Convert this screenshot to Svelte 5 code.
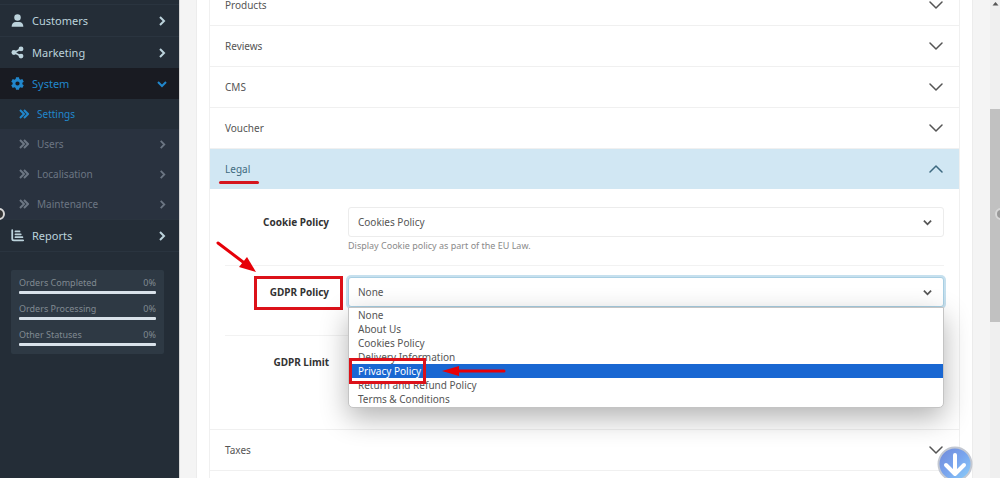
<script lang="ts">
	interface MenuItem {
		name: string
		icon: 'user' | 'share' | 'gear' | 'chart'
		open?: boolean
		children?: { name: string; active?: boolean; more?: boolean }[]
	}

	const menu: MenuItem[] = [
		{ name: 'Customers', icon: 'user' },
		{ name: 'Marketing', icon: 'share' },
		{
			name: 'System',
			icon: 'gear',
			open: true,
			children: [
				{ name: 'Settings', active: true },
				{ name: 'Users', more: true },
				{ name: 'Localisation', more: true },
				{ name: 'Maintenance', more: true }
			]
		},
		{ name: 'Reports', icon: 'chart' }
	]

	const stats = [
		{ name: 'Orders Completed', value: 0 },
		{ name: 'Orders Processing', value: 0 },
		{ name: 'Other Statuses', value: 0 }
	]

	const sections = ['Products', 'Reviews', 'CMS', 'Voucher', 'Legal', 'Taxes']

	const pages = [
		'None',
		'About Us',
		'Cookies Policy',
		'Delivery Information',
		'Privacy Policy',
		'Return and Refund Policy',
		'Terms & Conditions'
	]

	let openSection = $state('Legal')
	let cookiePolicy = $state('Cookies Policy')
	let gdprPolicy = $state('None')
	let gdprLimit = $state('180')
	let highlighted = $state('Privacy Policy')

	function toggle(name: string) {
		openSection = openSection === name ? '' : name
	}
</script>

{#snippet chevron(dir: string)}
	<svg class="chevron {dir}" viewBox="0 0 10 10" aria-hidden="true"><path d="M3 1l4 4-4 4" /></svg>
{/snippet}

<div class="shell">
	<nav class="sidebar">
		<ul class="menu">
			{#each menu as item}
				<li class:open={item.open}>
					<a href="#{item.name}" class="top">
						<svg class="icon" viewBox="0 0 16 16" aria-hidden="true">
							{#if item.icon === 'user'}
								<circle cx="8" cy="4.3" r="4" />
								<path d="M.8 15.700c0-4 2-6 5.200-6h4c3.200 0 5.200 2 5.200 6z" />
							{:else if item.icon === 'share'}
								<path d="M12 3.6L4 8l8 4.4" fill="none" stroke="currentColor" stroke-width="2" />
								<circle cx="12.3" cy="3.6" r="3" />
								<circle cx="3.6" cy="8" r="3" />
								<circle cx="12.3" cy="12.4" r="3" />
							{:else if item.icon === 'gear'}
								<path
									fill-rule="evenodd"
									d="M6.2.2h3.600l.5 2.300 1.400.8 2.200-.7 1.800 3.100-1.700 1.500v1.600l1.700 1.500-1.800 3.100-2.200-.7-1.400.8-.5 2.300H6.200l-.5-2.300-1.400-.8-2.200.7L.3 10.300 2 8.800V7.200L.3 5.700l1.800-3.100 2.200.7 1.400-.8zM8 5.400a2.600 2.600 0 1 0 0 5.200 2.600 2.600 0 0 0 0-5.200z"
								/>
							{:else}
								<path
									d="M1.500 1.500v10.500q0 2 2 2h11.500M5.500 3h5M5.500 6.500h6.500M5.500 10h8.500"
									fill="none"
									stroke="currentColor"
									stroke-width="2.200"
									stroke-linecap="round"
								/>
							{/if}
						</svg>
						<span>{item.name}</span>
						{@render chevron(item.open ? 'down' : 'right')}
					</a>
					{#if item.children}
						<ul class="sub">
							{#each item.children as child}
								<li>
									<a href="#{child.name}" class:active={child.active}>
										<svg class="double" viewBox="0 0 10 10" aria-hidden="true">
											<path d="M1 1l4 4-4 4M5 1l4 4-4 4" />
										</svg>
										<span>{child.name}</span>
										{#if child.more}{@render chevron('right')}{/if}
									</a>
								</li>
							{/each}
						</ul>
					{/if}
				</li>
			{/each}
		</ul>
		<div class="stats">
			{#each stats as stat}
				<div class="stat">
					<div class="stat-text"><span>{stat.name}</span><span>{stat.value}%</span></div>
					<div class="bar"><div class="fill" style="width: {stat.value}%"></div></div>
				</div>
			{/each}
		</div>
	</nav>

	<main>
		<div class="card">
			<div class="accordion">
				{#each sections as name}
					<section>
						<button
							type="button"
							class="head"
							class:expanded={openSection === name}
							aria-expanded={openSection === name}
							onclick={() => toggle(name)}
						>
							<span class:marked={name === 'Legal'}>{name}</span>
							<svg class="caret" viewBox="0 0 14 14" aria-hidden="true"><path d="M1 4l6 6 6-6" /></svg>
						</button>
						{#if name === 'Legal' && openSection === name}
							<div class="body">
								<div class="field">
									<label for="cookie">Cookie Policy</label>
									<div class="control">
										<div class="select">
											<select id="cookie" bind:value={cookiePolicy}>
												{#each pages as page}<option>{page}</option>{/each}
											</select>
											{@render chevron('down')}
										</div>
										<small>Display Cookie policy as part of the EU Law.</small>
									</div>
								</div>
								<div class="field">
									<label for="gdpr">
										GDPR Policy
										<span class="frame"></span>
										<svg class="arrow pointer" viewBox="0 0 42 34" aria-hidden="true">
											<path d="M2 3L31 25" stroke-width="3" />
											<path class="tip" d="M40 32L23 27l8-10z" />
										</svg>
									</label>
									<div class="control">
										<div class="select focus">
											<select id="gdpr" bind:value={gdprPolicy}>
												{#each pages as page}<option>{page}</option>{/each}
											</select>
											{@render chevron('down')}
											<ul class="dropdown" role="listbox" aria-label="GDPR Policy">
												{#each pages as page}
													<li
														role="option"
														aria-selected={page === highlighted}
														onmouseenter={() => (highlighted = page)}
													>
														{page}
														{#if page === 'Privacy Policy'}
															<span class="frame"></span>
															<svg class="arrow left" viewBox="0 0 64 12" aria-hidden="true">
																<path d="M14 6H62" stroke-width="3" />
																<path class="tip" d="M0 6L17 1v10z" />
															</svg>
														{/if}
													</li>
												{/each}
											</ul>
										</div>
									</div>
								</div>
								<div class="field">
									<label for="limit">GDPR Limit</label>
									<div class="control">
										<input id="limit" type="text" bind:value={gdprLimit} />
									</div>
								</div>
							</div>
						{/if}
					</section>
				{/each}
			</div>
		</div>
	</main>

	<div class="scrollbar" aria-hidden="true">
		<svg viewBox="0 0 10 8"><path d="M5.500 2L8.500 5.500h-6z" /></svg>
		<div class="thumb"></div>
	</div>

	<span class="knob start"></span>
	<span class="knob end"></span>
	<button type="button" class="jump" aria-label="Scroll down">
		<svg viewBox="0 0 36 36" aria-hidden="true">
			<defs>
				<linearGradient id="ball" x1="0" y1="0" x2="1" y2="1">
					<stop offset="0" stop-color="#7188d8" />
					<stop offset="0.500" stop-color="#79a5ee" />
					<stop offset="1" stop-color="#8ed2fa" />
				</linearGradient>
			</defs>
			<circle cx="18" cy="18" r="16.500" fill="url(#ball)" stroke="#c3c8d2" stroke-width="2" />
			<path d="M18 9v18M9 19l9 9 9-9" />
		</svg>
	</button>
</div>

<style>
	:global(body) {
		margin: 0;
		overflow: hidden;
		background: #f4f4f4;
	}
	.shell {
		position: relative;
		display: flex;
		height: 100vh;
		overflow: hidden;
		font: 10px/16px 'Noto Sans', 'Open Sans', sans-serif;
		color: #555;
	}
	ul {
		margin: 0;
		padding: 0;
		list-style: none;
	}
	a {
		color: inherit;
		text-decoration: none;
	}
	svg {
		flex: none;
	}

	/* sidebar */
	.sidebar {
		flex: 0 0 179px;
		background: #242d37;
		border-right: 1px solid #d8d8d8;
	}
	.menu {
		padding-top: 4px;
	}
	.menu > li {
		border-top: 1px solid #2a343f;
	}
	.menu > .open {
		border-top: 0;
	}
	.menu > li:last-child {
		border-bottom: 1px solid #2a343f;
	}
	.top,
	.sub a {
		display: flex;
		align-items: center;
		color: #bcd3dc;
	}
	.top {
		gap: 8px;
		height: 31px;
		padding: 0 12px 0 11px;
		font-size: 11px;
	}
	.top span,
	.sub span {
		flex: 1;
	}
	.open > .top {
		color: #2187cc;
		background: #191b22;
	}
	.icon {
		width: 13px;
		height: 13px;
		fill: currentColor;
	}
	.chevron,
	.double,
	.caret {
		width: 10px;
		height: 10px;
		fill: none;
		stroke: currentColor;
		stroke-width: 2;
	}
	.chevron.down {
		transform: rotate(90deg);
	}
	.sub {
		background: #29323f;
	}
	.sub a {
		gap: 8px;
		height: 30px;
		padding: 0 12px 0 19px;
		color: #6c7683;
	}
	.sub .chevron {
		width: 9px;
		height: 9px;
	}
	.sub a.active {
		color: #2187cc;
		background: #242d37;
	}
	.stats {
		display: grid;
		gap: 7px;
		margin: 18px 15px 0 11px;
		padding: 5px 8px 8px;
		background: #2e3944;
		border-radius: 2px;
		font-size: 9px;
		color: #808991;
	}
	.stat-text {
		display: flex;
		justify-content: space-between;
	}
	.bar {
		height: 3px;
		background: #d9e2ea;
		border-radius: 1px;
	}
	.fill {
		height: 100%;
		background: #2187cc;
	}

	/* settings card */
	main {
		flex: 1;
		padding: 0 17px 0 16px;
	}
	.card {
		display: flow-root;
		height: 100%;
		padding: 0 12px;
		background: #fff;
		border: solid #ececec;
		border-width: 0 1px;
	}
	.accordion {
		height: 100%;
		margin-top: -15px;
		padding-bottom: 15px;
		border: solid #f0f0f0;
		border-width: 0 1px;
	}
	section {
		border-bottom: 1px solid #f0f0f0;
	}
	.head {
		display: flex;
		align-items: center;
		justify-content: space-between;
		width: 100%;
		height: 40px;
		padding: 0 16px 0 15px;
		border: 0;
		background: transparent;
		font: inherit;
		color: #555;
	}
	.head.expanded {
		background: #d1e7f3;
		color: #3e6a80;
	}
	.caret {
		width: 14px;
		height: 14px;
		stroke-width: 1.500;
		stroke-linecap: round;
		stroke-linejoin: round;
	}
	.expanded .caret {
		transform: rotate(180deg);
	}
	.marked {
		position: relative;
	}
	.marked::after {
		content: '';
		position: absolute;
		top: 20px;
		left: -6px;
		width: 40px;
		height: 3px;
		background: #d5161e;
		border-radius: 2px;
	}
	.body {
		padding: 7px 15px 24px;
	}
	.field {
		display: grid;
		grid-template-columns: 104px 1fr;
		align-items: start;
		gap: 19px;
		padding: 11px 0;
	}
	.field + .field {
		min-height: 47px;
		border-top: 1px solid #f2f2f2;
	}
	label {
		position: relative;
		padding: 7px 0;
		text-align: right;
		font-weight: 700;
		color: #333;
	}
	.select {
		position: relative;
		display: flex;
		align-items: center;
	}
	.select .chevron {
		position: absolute;
		right: 12px;
		width: 9px;
		height: 9px;
		color: #555;
		pointer-events: none;
	}
	select,
	input {
		box-sizing: border-box;
		width: 100%;
		height: 30px;
		padding: 0 9px;
		appearance: none;
		background: #fff;
		border: 1px solid #ececec;
		border-radius: 3px;
		font: inherit;
		color: #555;
	}
	.focus select {
		border-color: #a9cfe3;
		box-shadow: 0 0 0 2px #c6e0ee;
	}
	small {
		display: block;
		padding-top: 1px;
		font-size: 9px;
		color: #8a8a8a;
	}
	.dropdown {
		position: absolute;
		z-index: 2;
		top: 100%;
		left: 0;
		right: 0;
		padding-bottom: 1px;
		background: #fff;
		border: 1px solid #c4c4c4;
		border-radius: 0 0 5px 5px;
		box-shadow: 0 10px 28px rgba(0, 0, 0, 0.3);
		line-height: 14px;
	}
	.dropdown li {
		position: relative;
		padding: 0 9px;
	}
	.dropdown li[aria-selected='true'] {
		background: #1967d2;
		color: #fff;
	}

	/* red call-outs */
	.frame {
		position: absolute;
		z-index: 1;
		border: 3px solid #dc1119;
	}
	label .frame {
		top: -1px;
		right: -14px;
		width: 83px;
		height: 28px;
	}
	.dropdown .frame {
		top: -6px;
		left: 0;
		width: 71px;
		height: 20px;
	}
	.arrow {
		position: absolute;
		fill: none;
		stroke: #e60008;
		stroke-linecap: round;
	}
	.arrow .tip {
		fill: #e60008;
		stroke: none;
	}
	.pointer {
		top: -37px;
		left: -9px;
		width: 42px;
		height: 34px;
	}
	.left {
		top: 1px;
		left: 93px;
		width: 64px;
		height: 12px;
	}

	/* page edges */
	.scrollbar {
		flex: 0 0 10px;
		background: #efefef;
	}
	.scrollbar svg {
		display: block;
		height: 8px;
		fill: #555;
	}
	.thumb {
		height: 213px;
		margin-top: 101px;
		background: #c1c1c1;
	}
	.knob {
		position: absolute;
		top: 208px;
		width: 8px;
		height: 8px;
		border: 2px solid #d8d8d8;
		border-radius: 50%;
		background: #333;
	}
	.start {
		left: -7px;
	}
	.end {
		right: -7px;
		background: #999;
	}
	.jump {
		position: absolute;
		right: 27px;
		bottom: -4px;
		width: 36px;
		height: 36px;
		padding: 0;
		border: 0;
		background: transparent;
	}
	.jump svg {
		display: block;
		fill: none;
	}
	.jump path {
		stroke: #fff;
		stroke-width: 4;
		stroke-linecap: round;
		stroke-linejoin: round;
	}
</style>
